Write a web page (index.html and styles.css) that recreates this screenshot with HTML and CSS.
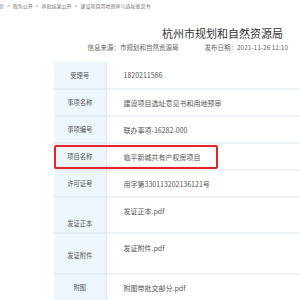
FILE: index.html
```html
<!DOCTYPE html>
<html lang="zh-CN">
<head>
    <meta charset="UTF-8">
    <meta name="viewport" content="width=device-width, initial-scale=1.0">
    <title>杭州市规划和自然资源局</title>
    <link rel="stylesheet" href="styles.css">
</head>
<body>
    <div class="crumbs">
        <span>页</span><span class="sep">&gt;</span><span>政务公开</span><span class="sep">&gt;</span><span>审批结果公开</span><span class="sep">&gt;</span><span>建设项目用地预审与选址意见书</span>
    </div>

    <div class="page-head">
        <h1 class="page-title">杭州市规划和自然资源局</h1>
        <div class="meta">
            <span>信息来源：市规划和自然资源局</span>
            <span>发布日期：2021-11-26 11:10</span>
        </div>
    </div>

    <!-- 审批信息表 -->
    <div class="sheet">
        <table class="info-table">
            <tr class="row-s"><th>受理号</th><td>1820211586</td></tr>
            <tr class="row-s"><th>事项名称</th><td>建设项目选址意见书和用地预审</td></tr>
            <tr class="row-s"><th>事项编号</th><td>联办事项-16282-000</td></tr>
            <tr class="row-s"><th>项目名称</th><td>临平新城共有产权房项目</td></tr>
            <tr class="row-s"><th>许可证号</th><td>用字第330113202136121号</td></tr>
            <tr class="row-file row-a"><th>发证正本</th><td>发证正本.pdf</td></tr>
            <tr class="row-file row-b"><th>发证附件</th><td>发证附件.pdf</td></tr>
            <tr class="row-s"><th>附图</th><td>附图带批文部分.pdf</td></tr>
        </table>
        <div class="mark"></div>
    </div>
</body>
</html>
```

FILE: styles.css
```css
* {
    margin: 0;
    padding: 0;
    box-sizing: border-box;
}

body {
    font-family: "Noto Sans CJK SC", "Noto Sans", sans-serif;
    color: #555;
    background: #fff;
    overflow: hidden;
    width: 300px;
    height: 300px;
}

/* 面包屑 */
.crumbs {
    font-size: 5px;
    line-height: 8px;
    color: #777;
    padding-top: 2px;
    margin-left: -1px;
    white-space: nowrap;
    display: flex;
    gap: 3px;
}

/* 标题 */
.page-head {
    display: flex;
    flex-direction: column;
    align-items: flex-end;
}

.page-title {
    font-size: 11px;
    font-weight: 400;
    line-height: 14px;
    color: #333;
    margin-top: 16px;
    margin-right: 17px;
}

.meta {
    font-size: 6.5px;
    line-height: 10px;
    color: #666;
    margin-top: 2px;
    margin-right: 12px;
    display: flex;
    gap: 26px;
}

/* 表格 */
.sheet {
    position: relative;
    margin: 10px 0 0 54px;
}

.info-table {
    width: 270px;
    border-collapse: collapse;
    font-size: 7px;
}

.info-table th {
    width: 52px;
    background: #edf5fd;
    font-weight: 400;
    font-size: 6.3px;
    color: #555;
    text-align: center;
    border-bottom: 2px solid #e3ecf5;
    border-right: 1px solid #dfe8f2;
}

.info-table td {
    padding-left: 17px;
    color: #555;
    border-bottom: 2px solid #eef2f7;
}

.row-s {
    height: 27px;
}

.row-a {
    height: 36px;
}

.row-b {
    height: 41px;
}

.row-a th {
    padding-top: 16px;
}

.row-b th {
    padding-top: 4px;
}

.row-a td {
    padding-bottom: 8px;
}

.row-b td {
    padding-bottom: 12px;
}

/* 红框标注 */
.mark {
    position: absolute;
    left: 0;
    top: 83px;
    width: 164px;
    height: 24px;
    border: 2px solid #e4262a;
    border-radius: 2px;
}
```
